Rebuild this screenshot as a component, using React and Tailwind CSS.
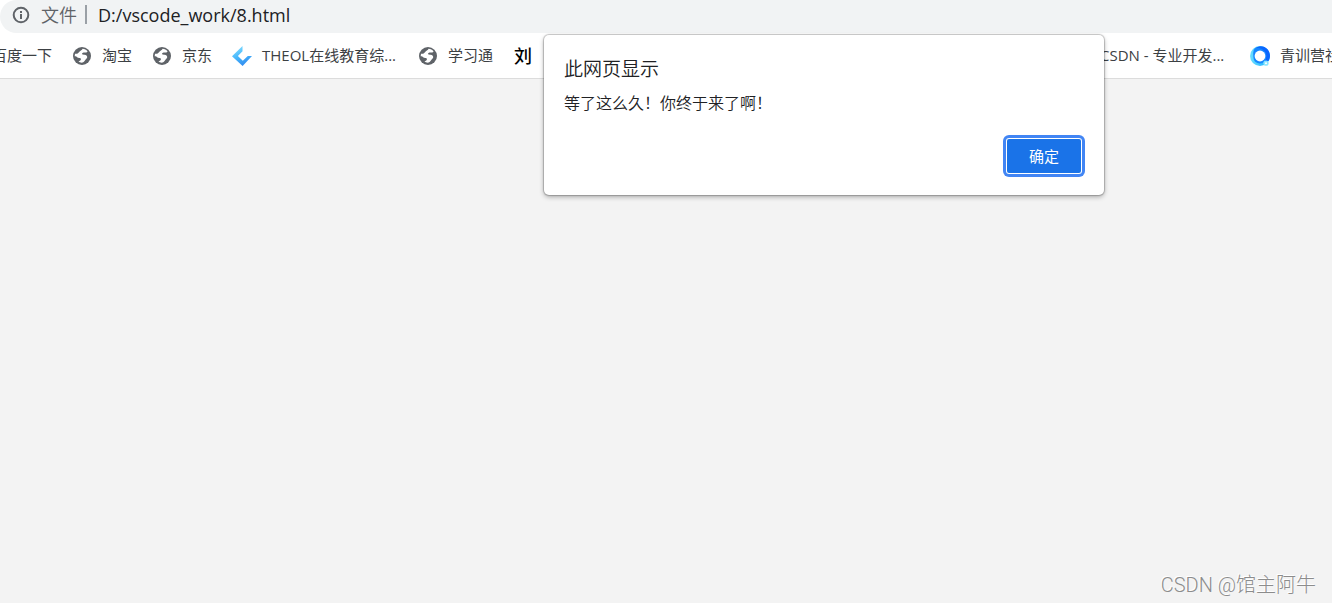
import React from 'react';

const GlobeIcon = () => (
  <svg viewBox="0 0 20 20" className="h-5 w-5 shrink-0" aria-hidden="true">
    <circle cx="10" cy="10" r="9" fill="#5f6368" />
    <path
      d="M10.500 2.800c2 0 3.900 1.200 5.100 2.600-.6 1-1.700 1.200-2.800 1.200-.9 0-1.600.1-2.300.5-.7.4-.6 1.300.2 1.500.6.1 1.300 0 2 .1 1.500.1 2.500 1 2.500 2.300 0 1.500-1.200 1.800-1.800 2.800-.6 1.100-1.300 2.300-2.700 2.700-1.400.4-2.900 0-4.200-.7.6-1 2.200-1.100 2.400-2.300.2-1-.8-1.300-1.800-1.400-1.400-.1-1.900-1-2.800-1.500-.5-.3-1-.4-1.600-.4 0-.9.1-1.700.4-2.500 1.100.2 1.900.2 2.900-.5 1.100-.8 1.400-1.900 2.600-2.500.8-.4 1.500-.9 1.900-1.900z"
      fill="#fff"
    />
  </svg>
);

const TheolIcon = () => (
  <svg viewBox="0 0 20 20" className="h-5 w-5 shrink-0" aria-hidden="true">
    <defs>
      <linearGradient id="theol" x1="0.3" y1="0" x2="0.7" y2="1">
        <stop offset="0" stopColor="#7fdcff" />
        <stop offset="0.5" stopColor="#45b5fb" />
        <stop offset="1" stopColor="#2f86ee" />
      </linearGradient>
    </defs>
    <path d="M10.500 0v5.200L5.900 10l4.900 4.800 5-4.800h4.200L10.600 20 0 10.300z" fill="url(#theol)" />
  </svg>
);

const CampIcon = () => (
  <svg viewBox="0 0 20 20" className="h-5 w-5 shrink-0" aria-hidden="true">
    <defs>
      <linearGradient id="camp" x1="0" y1="0" x2="1" y2="0">
        <stop offset="0" stopColor="#6be0ff" />
        <stop offset="1" stopColor="#12a9ff" />
      </linearGradient>
    </defs>
    <circle cx="10" cy="10" r="10" fill="url(#camp)" />
    <path d="M4.500 2.800C8-.6 14-.8 17.500 3.200c3.300 3.900 3.200 9.200.2 12.600L14 16c2-3 3-6 1.500-9S8 2.500 4.500 2.800z" fill="#0a66ff" />
    <path d="M4.500 2.800C8.500.5 14 3 15.500 7s-.5 7.500-3 10C8 18.500 4 16 3.500 12S3 5 4.500 2.800z" fill="#1687ff" />
    <circle cx="10" cy="10" r="5.400" fill="#fff" />
    <circle cx="16" cy="17.200" r="2.600" fill="#8be6ff" />
    <circle cx="16" cy="17.200" r="1" fill="#fff" />
  </svg>
);

const LiuIcon = () => (
  <span className="w-5 shrink-0 text-center text-[18px] leading-5 font-medium text-black" aria-hidden="true">
    刘
  </span>
);

const Bookmark = ({ icon, children, className = '' }) => (
  <a href="#" className={`flex shrink-0 items-center gap-[10px] whitespace-nowrap ${className}`}>
    {icon}
    {children}
  </a>
);

const App = () => (
  <div className="relative flex min-h-screen flex-col overflow-hidden bg-[#f3f3f3] font-['Open_Sans','Noto_Sans_CJK_SC',sans-serif] font-[350]">
    {/* Address bar */}
    <header className="bg-white">
      <div className="flex h-[33px] items-center rounded-l-full bg-[#f1f3f4] pb-1 pl-[12px] text-[18px] leading-6">
        <svg viewBox="0 0 18 18" className="h-[18px] w-[18px]" fill="none" stroke="#5f6368" strokeWidth="2" aria-hidden="true">
          <circle cx="9" cy="9" r="7.300" />
          <path d="M9 8v5M9 5v2" />
        </svg>
        <span className="ml-[11px] text-[#5f6368]">文件</span>
        <span className="mx-[8px] h-[19px] w-[2px] bg-[#9aa0a6]" />
        <input
          type="text"
          aria-label="地址"
          defaultValue="D:/vscode_work/8.html"
          className="min-w-0 flex-1 bg-transparent pl-[3px] font-normal text-[#202124] outline-none"
        />
      </div>
    </header>

    {/* Bookmarks bar */}
    <nav className="flex h-[46px] items-center justify-between overflow-hidden border-b border-[#dcdcdc] bg-white text-[15px] font-normal text-[#3c4043]">
      <div className="-ml-[38px] flex items-center gap-5">
        <Bookmark icon={<GlobeIcon />}>百度一下</Bookmark>
        <Bookmark icon={<GlobeIcon />}>淘宝</Bookmark>
        <Bookmark icon={<GlobeIcon />}>京东</Bookmark>
        <Bookmark icon={<TheolIcon />} className="w-[166px]">THEOL在线教育综...</Bookmark>
        <Bookmark icon={<GlobeIcon />}>学习通</Bookmark>
        <Bookmark icon={<LiuIcon />} />
      </div>
      <div className="flex w-[232px] items-center gap-5 overflow-hidden">
        <Bookmark className="w-[130px]">CSDN - 专业开发...</Bookmark>
        <Bookmark icon={<CampIcon />}>青训营社</Bookmark>
      </div>
    </nav>

    {/* Alert dialog */}
    <div
      role="alertdialog"
      aria-labelledby="alert-title"
      aria-describedby="alert-text"
      className="absolute top-[35px] left-[544px] w-[560px] rounded-[5px] bg-white px-5 pt-5 pb-[21px] text-[#202124] shadow-[0_0_1px_1px_rgba(0,0,0,0.2),0_2px_5px_rgba(0,0,0,0.3)]"
    >
      <h1 id="alert-title" className="text-[19px] leading-7">此网页显示</h1>
      <p id="alert-text" className="mt-2 text-[16px] leading-6">等了这么久！你终于来了啊！</p>
      <div className="mt-[23px] flex justify-end pr-[2px]">
        <button
          type="button"
          className="h-[36px] w-[76px] rounded-[3px] bg-[#1a73e8] text-[15px] font-normal text-white ring-3 ring-[#4285f4] inset-ring-1 inset-ring-white"
        >
          确定
        </button>
      </div>
    </div>

    <span className="absolute right-4 bottom-1 font-['Roboto','Noto_Sans_CJK_SC',sans-serif] text-[20px] leading-7 font-light text-[#8c8c8c] [text-shadow:-1px_-1px_0_#fff]">
      CSDN @馆主阿牛
    </span>
  </div>
);

export default App;
